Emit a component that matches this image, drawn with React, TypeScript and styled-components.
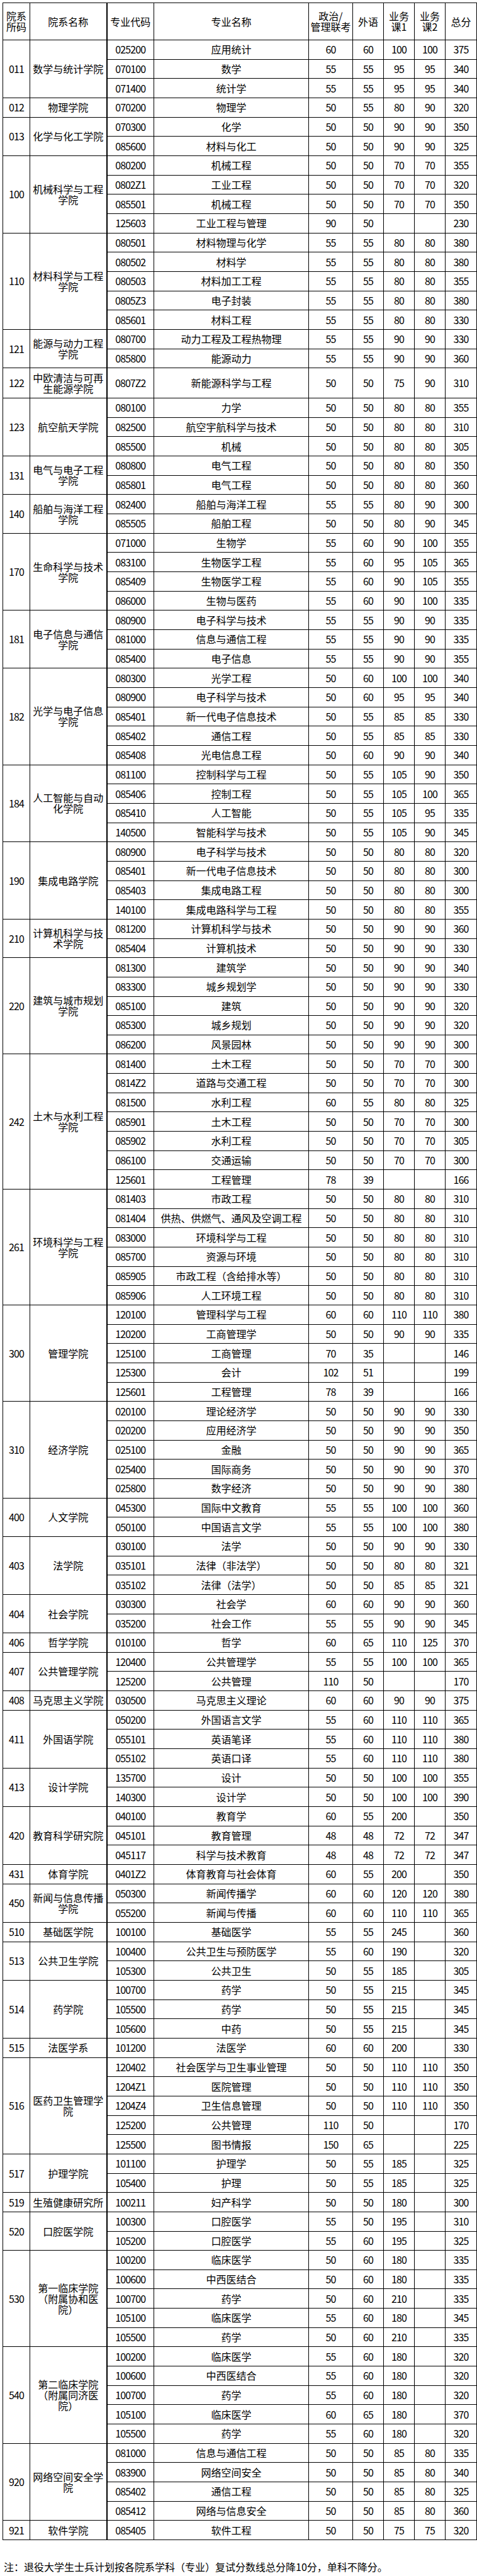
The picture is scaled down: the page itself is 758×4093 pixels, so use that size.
import React from 'react';
import styled, {createGlobalStyle} from 'styled-components';

type Major = [string, string, string, string, string, string, string];
type Group = {code: string; name: string; tall?: boolean; rows: Major[]};

const groups: Group[] = [
  {code: '011', name: '数学与统计学院', rows: [
    ['025200', '应用统计', '60', '60', '100', '100', '375'],
    ['070100', '数学', '55', '55', '95', '95', '340'],
    ['071400', '统计学', '55', '55', '95', '95', '340'],
  ]},
  {code: '012', name: '物理学院', rows: [
    ['070200', '物理学', '50', '55', '80', '90', '320'],
  ]},
  {code: '013', name: '化学与化工学院', rows: [
    ['070300', '化学', '50', '50', '90', '90', '350'],
    ['085600', '材料与化工', '50', '50', '90', '90', '325'],
  ]},
  {code: '100', name: '机械科学与工程学院', rows: [
    ['080200', '机械工程', '50', '50', '70', '70', '355'],
    ['0802Z1', '工业工程', '50', '50', '70', '70', '320'],
    ['085501', '机械工程', '50', '50', '70', '70', '350'],
    ['125603', '工业工程与管理', '90', '50', '', '', '230'],
  ]},
  {code: '110', name: '材料科学与工程学院', rows: [
    ['080501', '材料物理与化学', '55', '55', '80', '80', '380'],
    ['080502', '材料学', '55', '55', '80', '80', '380'],
    ['080503', '材料加工工程', '55', '55', '80', '80', '355'],
    ['0805Z3', '电子封装', '55', '55', '80', '80', '380'],
    ['085601', '材料工程', '55', '55', '80', '80', '330'],
  ]},
  {code: '121', name: '能源与动力工程学院', rows: [
    ['080700', '动力工程及工程热物理', '55', '55', '90', '90', '330'],
    ['085800', '能源动力', '55', '55', '90', '90', '360'],
  ]},
  {code: '122', name: '中欧清洁与可再生能源学院', tall: true, rows: [
    ['0807Z2', '新能源科学与工程', '50', '50', '75', '90', '310'],
  ]},
  {code: '123', name: '航空航天学院', rows: [
    ['080100', '力学', '50', '50', '80', '80', '355'],
    ['082500', '航空宇航科学与技术', '50', '50', '80', '80', '310'],
    ['085500', '机械', '50', '50', '80', '80', '305'],
  ]},
  {code: '131', name: '电气与电子工程学院', rows: [
    ['080800', '电气工程', '50', '50', '80', '80', '350'],
    ['085801', '电气工程', '50', '50', '80', '80', '360'],
  ]},
  {code: '140', name: '船舶与海洋工程学院', rows: [
    ['082400', '船舶与海洋工程', '55', '55', '80', '90', '300'],
    ['085505', '船舶工程', '50', '50', '80', '90', '345'],
  ]},
  {code: '170', name: '生命科学与技术学院', rows: [
    ['071000', '生物学', '55', '60', '90', '100', '355'],
    ['083100', '生物医学工程', '55', '60', '95', '105', '365'],
    ['085409', '生物医学工程', '55', '60', '90', '105', '355'],
    ['086000', '生物与医药', '55', '60', '90', '100', '335'],
  ]},
  {code: '181', name: '电子信息与通信学院', rows: [
    ['080900', '电子科学与技术', '55', '55', '90', '90', '335'],
    ['081000', '信息与通信工程', '55', '55', '90', '90', '335'],
    ['085400', '电子信息', '55', '55', '90', '90', '355'],
  ]},
  {code: '182', name: '光学与电子信息学院', rows: [
    ['080300', '光学工程', '50', '60', '100', '100', '340'],
    ['080900', '电子科学与技术', '50', '60', '95', '95', '340'],
    ['085401', '新一代电子信息技术', '50', '55', '85', '85', '330'],
    ['085402', '通信工程', '50', '55', '85', '85', '330'],
    ['085408', '光电信息工程', '50', '60', '90', '90', '340'],
  ]},
  {code: '184', name: '人工智能与自动化学院', rows: [
    ['081100', '控制科学与工程', '50', '55', '105', '90', '350'],
    ['085406', '控制工程', '50', '55', '105', '100', '365'],
    ['085410', '人工智能', '50', '55', '105', '95', '335'],
    ['140500', '智能科学与技术', '50', '55', '105', '90', '345'],
  ]},
  {code: '190', name: '集成电路学院', rows: [
    ['080900', '电子科学与技术', '50', '50', '80', '80', '320'],
    ['085401', '新一代电子信息技术', '50', '50', '80', '80', '300'],
    ['085403', '集成电路工程', '50', '50', '80', '80', '300'],
    ['140100', '集成电路科学与工程', '50', '50', '80', '80', '355'],
  ]},
  {code: '210', name: '计算机科学与技术学院', rows: [
    ['081200', '计算机科学与技术', '50', '50', '90', '90', '360'],
    ['085404', '计算机技术', '50', '50', '90', '90', '330'],
  ]},
  {code: '220', name: '建筑与城市规划学院', rows: [
    ['081300', '建筑学', '50', '50', '90', '90', '340'],
    ['083300', '城乡规划学', '50', '50', '90', '90', '330'],
    ['085100', '建筑', '50', '50', '90', '90', '320'],
    ['085300', '城乡规划', '50', '50', '90', '90', '320'],
    ['086200', '风景园林', '50', '50', '90', '90', '300'],
  ]},
  {code: '242', name: '土木与水利工程学院', rows: [
    ['081400', '土木工程', '50', '50', '70', '70', '300'],
    ['0814Z2', '道路与交通工程', '50', '50', '70', '70', '300'],
    ['081500', '水利工程', '60', '55', '80', '80', '325'],
    ['085901', '土木工程', '50', '50', '70', '70', '300'],
    ['085902', '水利工程', '50', '50', '70', '70', '305'],
    ['086100', '交通运输', '50', '50', '70', '70', '300'],
    ['125601', '工程管理', '78', '39', '', '', '166'],
  ]},
  {code: '261', name: '环境科学与工程学院', rows: [
    ['081403', '市政工程', '50', '50', '80', '80', '310'],
    ['081404', '供热、供燃气、通风及空调工程', '50', '50', '80', '80', '310'],
    ['083000', '环境科学与工程', '50', '50', '80', '80', '310'],
    ['085700', '资源与环境', '50', '50', '80', '80', '310'],
    ['085905', '市政工程（含给排水等）', '50', '50', '80', '80', '310'],
    ['085906', '人工环境工程', '50', '50', '80', '80', '310'],
  ]},
  {code: '300', name: '管理学院', rows: [
    ['120100', '管理科学与工程', '60', '60', '110', '110', '380'],
    ['120200', '工商管理学', '50', '50', '90', '90', '335'],
    ['125100', '工商管理', '70', '35', '', '', '146'],
    ['125300', '会计', '102', '51', '', '', '199'],
    ['125601', '工程管理', '78', '39', '', '', '166'],
  ]},
  {code: '310', name: '经济学院', rows: [
    ['020100', '理论经济学', '50', '50', '90', '90', '330'],
    ['020200', '应用经济学', '50', '50', '90', '90', '350'],
    ['025100', '金融', '50', '50', '90', '90', '365'],
    ['025400', '国际商务', '50', '50', '90', '90', '370'],
    ['025800', '数字经济', '50', '50', '90', '90', '380'],
  ]},
  {code: '400', name: '人文学院', rows: [
    ['045300', '国际中文教育', '55', '55', '100', '100', '360'],
    ['050100', '中国语言文学', '55', '55', '100', '100', '380'],
  ]},
  {code: '403', name: '法学院', rows: [
    ['030100', '法学', '50', '50', '90', '90', '330'],
    ['035101', '法律（非法学）', '50', '50', '80', '80', '321'],
    ['035102', '法律（法学）', '50', '50', '85', '85', '321'],
  ]},
  {code: '404', name: '社会学院', rows: [
    ['030300', '社会学', '60', '60', '90', '90', '360'],
    ['035200', '社会工作', '55', '55', '90', '90', '345'],
  ]},
  {code: '406', name: '哲学学院', rows: [
    ['010100', '哲学', '60', '65', '110', '125', '370'],
  ]},
  {code: '407', name: '公共管理学院', rows: [
    ['120400', '公共管理学', '55', '55', '100', '100', '365'],
    ['125200', '公共管理', '110', '50', '', '', '170'],
  ]},
  {code: '408', name: '马克思主义学院', rows: [
    ['030500', '马克思主义理论', '60', '60', '90', '90', '375'],
  ]},
  {code: '411', name: '外国语学院', rows: [
    ['050200', '外国语言文学', '55', '60', '110', '110', '365'],
    ['055101', '英语笔译', '55', '60', '110', '110', '380'],
    ['055102', '英语口译', '55', '60', '110', '110', '380'],
  ]},
  {code: '413', name: '设计学院', rows: [
    ['135700', '设计', '50', '50', '100', '100', '355'],
    ['140300', '设计学', '50', '50', '100', '100', '390'],
  ]},
  {code: '420', name: '教育科学研究院', rows: [
    ['040100', '教育学', '60', '55', '200', '', '350'],
    ['045101', '教育管理', '48', '48', '72', '72', '347'],
    ['045117', '科学与技术教育', '48', '48', '72', '72', '347'],
  ]},
  {code: '431', name: '体育学院', rows: [
    ['0401Z2', '体育教育与社会体育', '60', '55', '200', '', '350'],
  ]},
  {code: '450', name: '新闻与信息传播学院', rows: [
    ['050300', '新闻传播学', '60', '60', '120', '120', '380'],
    ['055200', '新闻与传播', '60', '60', '110', '110', '365'],
  ]},
  {code: '510', name: '基础医学院', rows: [
    ['100100', '基础医学', '55', '55', '245', '', '360'],
  ]},
  {code: '513', name: '公共卫生学院', rows: [
    ['100400', '公共卫生与预防医学', '55', '60', '190', '', '320'],
    ['105300', '公共卫生', '50', '55', '185', '', '305'],
  ]},
  {code: '514', name: '药学院', rows: [
    ['100700', '药学', '50', '55', '215', '', '345'],
    ['105500', '药学', '50', '55', '215', '', '345'],
    ['105600', '中药', '50', '55', '215', '', '345'],
  ]},
  {code: '515', name: '法医学系', rows: [
    ['101200', '法医学', '60', '60', '200', '', '330'],
  ]},
  {code: '516', name: '医药卫生管理学院', rows: [
    ['120402', '社会医学与卫生事业管理', '50', '50', '110', '110', '350'],
    ['1204Z1', '医院管理', '50', '50', '110', '110', '350'],
    ['1204Z4', '卫生信息管理', '50', '50', '110', '110', '350'],
    ['125200', '公共管理', '110', '50', '', '', '170'],
    ['125500', '图书情报', '150', '65', '', '', '225'],
  ]},
  {code: '517', name: '护理学院', rows: [
    ['101100', '护理学', '50', '55', '185', '', '325'],
    ['105400', '护理', '50', '55', '185', '', '325'],
  ]},
  {code: '519', name: '生殖健康研究所', rows: [
    ['100211', '妇产科学', '50', '50', '180', '', '300'],
  ]},
  {code: '520', name: '口腔医学院', rows: [
    ['100300', '口腔医学', '55', '50', '195', '', '310'],
    ['105200', '口腔医学', '55', '60', '195', '', '325'],
  ]},
  {code: '530', name: '第一临床学院（附属协和医院）', rows: [
    ['100200', '临床医学', '50', '60', '180', '', '335'],
    ['100600', '中西医结合', '50', '60', '180', '', '335'],
    ['100700', '药学', '50', '60', '210', '', '335'],
    ['105100', '临床医学', '55', '60', '180', '', '345'],
    ['105500', '药学', '50', '60', '210', '', '335'],
  ]},
  {code: '540', name: '第二临床学院（附属同济医院）', rows: [
    ['100200', '临床医学', '55', '60', '180', '', '320'],
    ['100600', '中西医结合', '55', '60', '180', '', '320'],
    ['100700', '药学', '55', '60', '180', '', '320'],
    ['105100', '临床医学', '60', '65', '180', '', '370'],
    ['105500', '药学', '55', '60', '180', '', '320'],
  ]},
  {code: '920', name: '网络空间安全学院', rows: [
    ['081000', '信息与通信工程', '50', '50', '85', '80', '335'],
    ['083900', '网络空间安全', '50', '50', '85', '80', '340'],
    ['085402', '通信工程', '50', '50', '85', '80', '325'],
    ['085412', '网络与信息安全', '50', '50', '85', '80', '360'],
  ]},
  {code: '921', name: '软件学院', rows: [
    ['085405', '软件工程', '50', '50', '75', '75', '320'],
  ]},
];

const widths = [43, 122, 75, 246, 70, 49, 49, 49, 50];

const GlobalStyle = createGlobalStyle`
  html, body {
    margin: 0;
    padding: 0;
    background: #fff;
  }

  body {
    font-family: "Noto Sans CJK SC", "Noto Sans", sans-serif;
    color: #000;
  }
`;

const Page = styled.div`
  padding: 4px 0 0 4px;
`;

const Table = styled.table`
  width: 753px;
  table-layout: fixed;
  border-collapse: collapse;
  font-size: 16px;
  line-height: 17px;
`;

const HeadRow = styled.tr`
  height: 59px;
`;

const Row = styled.tr<{$tall?: boolean}>`
  height: ${p => (p.$tall ? 48 : 30.67)}px;
`;

const HeadCell = styled.th<{$split?: boolean}>`
  border: 1px solid #000;
  ${p => p.$split && 'border-left-width: 2px;'}
  padding: 0 2px;
  font-weight: normal;
  text-align: center;
  vertical-align: middle;
  white-space: nowrap;
`;

const Cell = styled.td<{$num?: boolean; $split?: boolean}>`
  border: 1px solid #000;
  ${p => p.$split && 'border-left-width: 2px;'}
  padding: 0 2px;
  text-align: center;
  vertical-align: middle;
  white-space: nowrap;
  letter-spacing: ${p => (p.$num ? '-0.9px' : '0')};
`;

const NameCell = styled.td`
  border: 1px solid #000;
  padding: 0 3px;
  text-align: center;
  vertical-align: middle;
  white-space: normal;
  word-break: break-all;
`;

const Note = styled.p`
  margin: 32px 0 0 2px;
  font-size: 16px;
  line-height: 20px;
  white-space: nowrap;
`;

export default function App() {
  return (
    <>
      <GlobalStyle/>
      <Page>
        <Table>
          <colgroup>
            {widths.map((w, i) => <col key={i} style={{width: w}}/>)}
          </colgroup>
          <thead>
            <HeadRow>
              <HeadCell>院系<br/>所码</HeadCell>
              <HeadCell>院系名称</HeadCell>
              <HeadCell $split>专业代码</HeadCell>
              <HeadCell>专业名称</HeadCell>
              <HeadCell>政治/<br/>管理联考</HeadCell>
              <HeadCell>外语</HeadCell>
              <HeadCell>业务<br/>课1</HeadCell>
              <HeadCell>业务<br/>课2</HeadCell>
              <HeadCell>总分</HeadCell>
            </HeadRow>
          </thead>
          <tbody>
            {groups.map(g => g.rows.map((r, i) => (
              <Row key={g.code + r[0] + i} $tall={g.tall}>
                {i === 0 && (
                  <>
                    <Cell $num rowSpan={g.rows.length}>{g.code}</Cell>
                    <NameCell rowSpan={g.rows.length}>{g.name}</NameCell>
                  </>
                )}
                <Cell $num $split>{r[0]}</Cell>
                <Cell>{r[1]}</Cell>
                <Cell $num>{r[2]}</Cell>
                <Cell $num>{r[3]}</Cell>
                <Cell $num>{r[4]}</Cell>
                <Cell $num>{r[5]}</Cell>
                <Cell $num>{r[6]}</Cell>
              </Row>
            )))}
          </tbody>
        </Table>
        <Note>注：退役大学生士兵计划按各院系学科（专业）复试分数线总分降10分，单科不降分。</Note>
      </Page>
    </>
  );
}
